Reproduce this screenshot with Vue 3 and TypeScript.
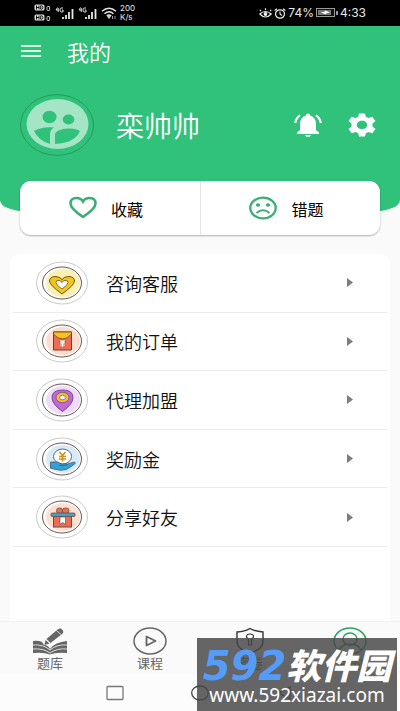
<script setup lang="ts">
interface MenuItem {
  id: 'service' | 'orders' | 'agent' | 'reward' | 'share'
  label: string
  tint: string
}

interface TabItem {
  id: 'bank' | 'course' | 'paper' | 'mine'
  label: string
}

const menu: MenuItem[] = [
  { id: 'service', label: '咨询客服', tint: '#faf0b4' },
  { id: 'orders', label: '我的订单', tint: '#fbdccd' },
  { id: 'agent', label: '代理加盟', tint: '#f0d9fa' },
  { id: 'reward', label: '奖励金', tint: '#d8eaf8' },
  { id: 'share', label: '分享好友', tint: '#fde0d2' },
]

const tabs: TabItem[] = [
  { id: 'bank', label: '题库' },
  { id: 'course', label: '课程' },
  { id: 'paper', label: '密卷' },
  { id: 'mine', label: '我的' },
]

const activeTab = 'mine'
</script>

<template>
  <div class="screen">
    <div class="status">
      <div class="status-group">
        <svg class="hd" viewBox="0 0 18 18" aria-hidden="true">
          <g v-for="y in [0, 10]" :key="y" :transform="`translate(0 ${y})`">
            <rect x="0.5" y="0.5" width="10" height="6" rx="1.5" fill="#ddd" />
            <path d="M2.5 1.5v4M5 1.5v4M2.5 3.5H5M6.7 1.8v3.4h1q1.2-.2 1.2-1.7t-1.2-1.7z" fill="none" stroke="#000" stroke-width=".9" />
            <rect x="13" y="2.5" width="2.6" height="4" rx=".6" fill="none" stroke="#ccc" />
          </g>
        </svg>
        <svg v-for="n in 2" :key="n" class="signal" viewBox="0 0 20 14" aria-hidden="true">
          <path d="M2.5 1.5 1 4h3M3.2 2v4M8 2H6q-1 0-1 2t1 2h2V4H6.8" fill="none" stroke="#ddd" stroke-width="1" />
          <path d="M8 11v2M11 9v4M14 6v7M17.500 3v10" stroke="#e8e8e8" stroke-width="1.8" />
        </svg>
        <svg class="wifi" viewBox="0 0 16 12" aria-hidden="true">
          <path d="M1 4.200q7-6 14 0M3.500 6.700q4.500-4 9 0M5.800 9q2.200-2 4.400 0" fill="none" stroke="#e4e4e4" stroke-width="1.500" />
          <path d="M6.500 9.500h3L8 11.500zM11.500 9v3M14 9v3" fill="#e4e4e4" stroke="#e4e4e4" stroke-width=".7" />
        </svg>
        <span class="speed">200<br>K/s</span>
      </div>
      <div class="status-group right">
        <svg class="eye" viewBox="0 0 13 11" aria-hidden="true">
          <path d="M.8 6q5.700-5 11.400 0-5.700 6-11.400 0zM2 3 .8 1.800M6.500 2V.2M11 3l1.200-1.200" fill="none" stroke="#eee" stroke-width="1.200" />
          <circle cx="6.500" cy="6" r="1.900" fill="#eee" />
        </svg>
        <svg class="alarm" viewBox="0 0 12 11" aria-hidden="true">
          <ellipse cx="6" cy="6" rx="4.500" ry="4.200" fill="none" stroke="#eee" stroke-width="1.200" />
          <path d="M6 3.500V6l2 1.500M.6 2.500 3 .7M11.400 2.500 9 .7" fill="none" stroke="#eee" stroke-width="1.100" />
        </svg>
        <span class="percent">74%</span>
        <svg class="battery" viewBox="0 0 22 10" aria-hidden="true">
          <rect x=".5" y=".5" width="18" height="8" fill="#111" stroke="#999" />
          <rect x="2" y="2" width="13" height="5" fill="#777" />
          <path d="M5 4.500 9 3.500V2.500l5 2-4 1v1z" fill="#fff" />
          <path d="M21 3v4" stroke="#ccc" stroke-width="1.500" />
        </svg>
        <span class="clock">4:33</span>
      </div>
    </div>

    <header class="header">
      <div class="app-bar">
        <button class="icon-button" type="button" aria-label="菜单">
          <svg class="burger" viewBox="0 0 20 12" aria-hidden="true">
            <path d="M0 1h20M0 6h20M0 11h20" stroke="#d8fbe8" stroke-width="2" />
          </svg>
        </button>
        <h1 class="title">我的</h1>
      </div>
      <div class="profile">
        <svg class="avatar" viewBox="0 0 74 62" aria-hidden="true">
          <ellipse cx="37" cy="31" rx="36.500" ry="30.300" fill="none" stroke="#239a5f" stroke-width="1" />
          <ellipse cx="37.500" cy="30" rx="31" ry="25" fill="#a3e5c4" />
          <g fill="#30c27b">
            <ellipse cx="29.500" cy="23" rx="7" ry="6.200" />
            <ellipse cx="48.500" cy="25.500" rx="5.800" ry="5" />
            <path d="M14 37q8-4.500 20-3.500-4 2.500-4 6.500v10Q18 46 14 37zM35 50V40q2-5 13-5.500 8-.3 12 2.500-5 12-25 13z" />
          </g>
        </svg>
        <span class="name">栾帅帅</span>
        <button class="icon-button" type="button" aria-label="通知">
          <svg class="bell" viewBox="0 0 28 24" aria-hidden="true">
            <path d="M14 .5q2 0 2.200 2Q22 4.500 22 11v6l3 2.500V21H3v-1.500L6 17v-6q0-6.500 5.800-8.500Q12 .5 14 .5zM11 22h6q-.5 2-3 2t-3-2z" fill="#fff" />
            <path d="M1.200 10Q2 5 6 2.300M26.800 10Q26 5 22 2.300" fill="none" stroke="#fff" stroke-width="2.200" />
          </svg>
        </button>
        <button class="icon-button" type="button" aria-label="设置">
          <svg class="gear" viewBox="0 0 28 24" aria-hidden="true">
            <path fill-rule="evenodd" d="M11 .5h6l.8 3.200 2.700 1.300 3.700-1.200L27.500 8l-3 2.500v3l3 2.500-3.300 4.200-3.700-1.200-2.700 1.300-.8 3.200h-6l-.8-3.200L7.500 19l-3.700 1.200L.5 16l3-2.500v-3L.5 8l3.300-4.200L7.500 5l2.700-1.300zM14 7.800c-3 0-5.200 1.900-5.200 4.200s2.200 4.200 5.200 4.200 5.200-1.900 5.200-4.200S17 7.800 14 7.800z" fill="#fff" />
          </svg>
        </button>
      </div>
    </header>

    <section class="shortcuts">
      <button class="shortcut" type="button">
        <svg class="shortcut-icon" viewBox="0 0 28 24" aria-hidden="true">
          <path d="M14 21Q1.500 12.500 1.500 7.500 1.500 2 7.500 2 12 2 14 5.500 16 2 20.500 2q6 0 6 5.500 0 5-12.500 13.500z" fill="none" stroke="#3aaf75" stroke-width="2.600" />
        </svg>
        <span class="shortcut-label">收藏</span>
      </button>
      <button class="shortcut" type="button">
        <svg class="shortcut-icon" viewBox="0 0 28 24" aria-hidden="true">
          <ellipse cx="14" cy="12" rx="12.700" ry="10.300" fill="none" stroke="#3aaf75" stroke-width="2.300" />
          <ellipse cx="9" cy="9" rx="2.200" ry="1.700" fill="#3aaf75" />
          <ellipse cx="19" cy="9" rx="2.200" ry="1.700" fill="#3aaf75" />
          <path d="M7.500 17q6.500-5.500 13 0" fill="none" stroke="#3aaf75" stroke-width="2" />
        </svg>
        <span class="shortcut-label">错题</span>
      </button>
    </section>

    <main class="menu-card">
      <ul class="menu">
        <li v-for="item in menu" :key="item.id" class="menu-row">
          <a class="menu-link" href="#">
            <svg class="menu-icon" viewBox="0 0 52 44" aria-hidden="true">
              <ellipse cx="26" cy="22" rx="25.500" ry="21" fill="#fff" stroke="#bbb" stroke-width=".8" />
              <ellipse cx="26" cy="22" rx="19.500" ry="16" fill="#fff" stroke="#655850" stroke-width="1" />
              <ellipse cx="27" cy="22" rx="17" ry="14" :fill="item.tint" />
              <g v-if="item.id === 'service'" stroke="#6b5414">
                <path d="M26 33Q13.500 24 13.500 20t5.500-4.500q5 0 7 3 2-3 7-3 5.500.5 5.500 4.500T26 33z" fill="#f3c51d" />
                <path d="M26 28q-6-4-6-6.500t3-2q2 0 3 2 1-2 3-2 3-.5 3 2T26 28z" fill="#fff" stroke-width=".8" />
              </g>
              <g v-else-if="item.id === 'orders'" stroke="#70402c">
                <path d="M17.500 13h18v18h-18z" fill="#ee6c56" />
                <path d="M17.500 13h18v2q-4 5-9 5t-9-5z" fill="#f6c418" stroke-width=".8" />
                <ellipse cx="26.500" cy="23" rx="3" ry="2.500" fill="#eebc9a" stroke-width=".6" />
                <path d="m24.500 21 2 2.300 2-2.300M26.500 23.300V28M24.300 24h4.400M24.300 26h4.400" fill="none" stroke="#fff" stroke-width="1" />
              </g>
              <g v-else-if="item.id === 'agent'" stroke="#714a80">
                <path d="M26.500 33.500Q16 26 16 19.500q0-7.500 10.500-7.500T37 19.500q0 6.500-10.500 14z" fill="#bd6ad8" />
                <ellipse cx="26.500" cy="19.500" rx="6.500" ry="5.200" fill="#f5bf2d" stroke-width=".8" />
                <ellipse cx="26.500" cy="19.500" rx="3" ry="2.300" fill="#fff" stroke-width=".7" />
              </g>
              <g v-else-if="item.id === 'reward'" stroke="#4d5861">
                <ellipse cx="26.500" cy="19.500" rx="9" ry="7.500" fill="#fff" stroke-width=".9" />
                <path d="m23.500 15 3 3.500 3-3.500M26.500 18.500v6M23 19.500h7M23 22h7" fill="none" stroke="#c8921b" stroke-width="1.600" />
                <path d="M14.500 25h7l4 2h6l7-2q2 1-1 3l-7 4.500-6 .8-10-2z" fill="#2fa2dc" stroke-width=".8" />
                <path d="M23 28.500q5 1 9-1" fill="none" stroke-width=".8" />
              </g>
              <g v-else stroke="#67504a">
                <rect x="17.500" y="21" width="18" height="11" fill="#ee6c56" />
                <rect x="20.500" y="13" width="6" height="5.500" rx="2.500" fill="#ee6c56" stroke-width=".8" />
                <rect x="26.500" y="13" width="6.500" height="5.500" rx="2.500" fill="#ee6c56" stroke-width=".8" />
                <rect x="15" y="18" width="24" height="3.500" rx="1" fill="#3fa3c6" stroke-width=".8" />
                <path d="M24 22h5.500v7.500l-2.700-2-2.800 2z" fill="#fff" stroke-width=".7" />
              </g>
            </svg>
            <span class="menu-label">{{ item.label }}</span>
            <svg class="arrow" viewBox="0 0 6 9" aria-hidden="true">
              <path d="M0 0v9l6-4.500z" fill="#7c7c7c" />
            </svg>
          </a>
        </li>
      </ul>
    </main>

    <nav class="tabs">
      <a v-for="tab in tabs" :key="tab.id" class="tab" :class="{ active: tab.id === activeTab }" href="#">
        <svg class="tab-icon" viewBox="0 0 34 28" aria-hidden="true">
          <g v-if="tab.id === 'bank'" fill="currentColor">
            <path d="M0 14q5-1 9 1l2 3q4 0 6 4 5-7 17-8v12q-11-1-17 1.500Q11 25 0 26z" />
            <path d="M0 18q10-1 17 5 7-6 17-5M0 22q10-1 17 4 7-5 17-4" fill="none" stroke="#fafafa" stroke-width=".8" />
            <path d="m13.500 12 11-9.500q3-2 5 .5t-1 4.500L17.500 16z" />
            <path d="m12.500 13 4 3.500-5 1.500z" />
            <path d="m23.500 3.500 4.500 4" stroke="#fafafa" stroke-width=".8" />
          </g>
          <g v-else-if="tab.id === 'course'" fill="none" stroke="currentColor">
            <ellipse cx="17" cy="14" rx="16" ry="13" stroke-width="1.500" />
            <path d="M13.500 9.500v9l9-4.500z" stroke-width="1.800" stroke-linejoin="round" />
          </g>
          <g v-else-if="tab.id === 'paper'" fill="none" stroke="#333" stroke-width="1.400">
            <path d="M17 1.500q5 3 13 3.500v9q0 8.500-13 12Q4 22.500 4 14V5q8-.5 13-3.500z" />
            <path d="M15.500 18v-6q-2-1-2-2.500 0-2.500 3.500-2.500t3.500 2.500q0 1.500-2 2.500v6z" stroke-width="1.200" />
          </g>
          <g v-else fill="none" stroke="currentColor" stroke-width="1.500">
            <ellipse cx="17" cy="14" rx="16" ry="13" />
            <ellipse cx="17" cy="12" rx="7" ry="6" />
            <path d="M6 23q3-6 11-6t11 6" />
          </g>
        </svg>
        <span>{{ tab.label }}</span>
      </a>
    </nav>

    <div class="system-bar">
      <button class="icon-button" type="button" aria-label="最近任务">
        <svg class="system-icon" viewBox="0 0 18 16" aria-hidden="true">
          <rect x="1" y="1.500" width="16" height="13" rx="1" fill="none" stroke="#777" stroke-width="1.300" />
        </svg>
      </button>
      <button class="icon-button" type="button" aria-label="主页">
        <svg class="system-icon" viewBox="0 0 18 16" aria-hidden="true">
          <ellipse cx="9" cy="8" rx="8.300" ry="7" fill="none" stroke="#444" stroke-width="1.300" />
        </svg>
      </button>
      <button class="icon-button" type="button" aria-label="返回">
        <svg class="system-icon" viewBox="0 0 18 16" aria-hidden="true">
          <path d="M14 2v12L3 8z" fill="none" stroke="#444" stroke-width="1.300" />
        </svg>
      </button>
    </div>

    <aside class="stamp">
      <div class="stamp-name"><span class="stamp-number">592</span><span class="stamp-word">软件园</span></div>
      <div class="stamp-url">www.592xiazai.com</div>
    </aside>
  </div>
</template>

<style>
body {
  background: #fafafa;
}
</style>

<style scoped>
.screen {
  position: relative;
  display: flex;
  flex-direction: column;
  min-height: 100vh;
  overflow: hidden;
  color: #111;
  background: #fafafa;
  font-family: "Noto Sans CJK SC", sans-serif;
}

.screen *,
.screen {
  box-sizing: border-box;
}

svg {
  display: block;
  flex: none;
}

button {
  font: inherit;
  color: inherit;
  border: 0;
  background: none;
  padding: 0;
}

a {
  color: inherit;
  text-decoration: none;
}

.status {
  display: flex;
  align-items: center;
  justify-content: space-between;
  height: 26px;
  padding: 0 34px;
  background: #000;
  color: #e8e8e8;
  font-family: Inter, sans-serif;
  font-size: 12px;
  line-height: 14px;
}

.status-group {
  display: flex;
  align-items: center;
  gap: 3px;
}

.status-group.right {
  gap: 2px;
}

.hd {
  width: 18px;
  height: 18px;
}

.signal {
  width: 20px;
  height: 14px;
}

.wifi {
  width: 16px;
  height: 12px;
}

.speed {
  font-size: 8px;
  line-height: 9px;
}

.eye {
  width: 13px;
  height: 11px;
}

.alarm {
  width: 12px;
  height: 11px;
}

.battery {
  width: 22px;
  height: 10px;
}

.header {
  padding-bottom: 30px;
  background: #30c27b;
  border-radius: 0 0 24px 24px / 0 0 11px 11px;
  color: #fff;
}

.app-bar {
  display: flex;
  align-items: center;
  gap: 26px;
  height: 50px;
  padding: 0 21px;
}

.burger {
  width: 20px;
  height: 12px;
}

.title {
  margin: 0;
  font-size: 22px;
  font-weight: 350;
  line-height: 30px;
}

.profile {
  display: flex;
  align-items: center;
  gap: 26px;
  padding: 18px 24px 25px 20px;
}

.avatar {
  width: 74px;
  height: 62px;
}

.name {
  flex: 1;
  margin-left: -4px;
  font-size: 28px;
  font-weight: 350;
  line-height: 36px;
}

.bell,
.gear,
.shortcut-icon {
  width: 28px;
  height: 24px;
}

.shortcuts {
  position: relative;
  display: grid;
  grid-template-columns: 1fr 1fr;
  height: 54px;
  margin: -30px 20px 0;
  border-radius: 11px;
  background: #fff;
  box-shadow: 0 1px 2px rgba(0, 0, 0, 0.3);
}

.shortcut {
  display: flex;
  align-items: center;
  justify-content: center;
  gap: 14px;
  padding-right: 8px;
  font-size: 16px;
  line-height: 24px;
  color: #000;
}

.shortcut + .shortcut {
  border-left: 1px solid #e2e2e2;
}

.shortcut-label {
  padding-top: 2px;
}

.menu-card {
  flex: 1;
  margin: 19px 10px 0;
  border-radius: 10px 10px 0 0;
  background: #fff;
}

.menu {
  display: grid;
  grid-template-rows: repeat(5, 1fr);
  min-height: 293px;
  margin: 0;
  padding: 0 3px;
  list-style: none;
}

.menu-row {
  display: grid;
  border-bottom: 1px solid #ececec;
}

.menu-link {
  display: flex;
  align-items: center;
  padding: 0 34px 0 23px;
}

.menu-icon {
  width: 52px;
  height: 44px;
}

.menu-label {
  flex: 1;
  padding-left: 18px;
  font-size: 18px;
  font-weight: 350;
  line-height: 26px;
}

.arrow {
  width: 6px;
  height: 9px;
}

.tabs {
  display: grid;
  grid-template-columns: repeat(4, 1fr);
  height: 53px;
  border-top: 1px solid #f0f0f0;
  color: #666;
  background: #fafafa;
}

.tab {
  display: flex;
  flex-direction: column;
  align-items: center;
  padding-top: 5px;
  font-size: 13px;
  line-height: 16px;
}

.tab.active {
  color: #26a463;
}

.tab-icon {
  width: 34px;
  height: 28px;
}

.system-bar {
  display: flex;
  align-items: center;
  justify-content: center;
  gap: 67px;
  height: 37px;
  background: #fcfcfc;
}

.system-icon {
  width: 18px;
  height: 16px;
}

.stamp {
  position: absolute;
  right: 3px;
  bottom: 0;
  width: 200px;
  height: 73px;
  padding-top: 10px;
  background: rgba(72, 72, 72, 0.84);
  color: #fff;
  text-align: center;
  white-space: nowrap;
}

.stamp-name {
  display: flex;
  align-items: center;
  justify-content: center;
  height: 36px;
  font-style: italic;
  font-weight: 700;
}

.stamp-number {
  color: #559bf8;
  font-family: "DejaVu Sans", sans-serif;
  font-size: 40px;
  line-height: 36px;
}

.stamp-word {
  font-family: "Noto Sans CJK SC", sans-serif;
  font-size: 35px;
  font-weight: 900;
  line-height: 32px;
  padding-bottom: 4px;
}

.stamp-url {
  font-family: "Noto Sans", "Open Sans", sans-serif;
  font-size: 19px;
  line-height: 22px;
}
</style>
